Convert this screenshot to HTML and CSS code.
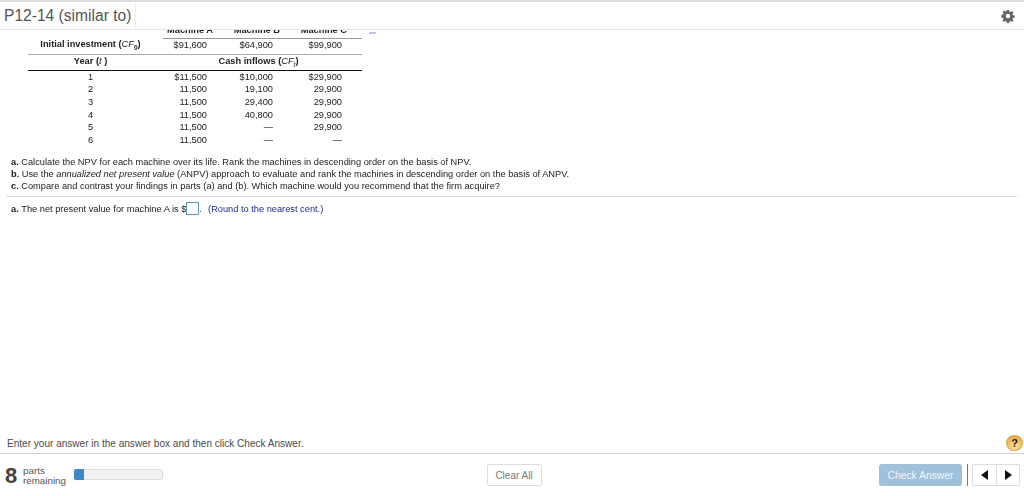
FILE: index.html
```html
<!DOCTYPE html>
<html lang="en">
<head>
<meta charset="utf-8">
<title>P12-14 (similar to)</title>
<link rel="stylesheet" href="styles.css">
</head>
<body>
<div class="app">
  <header class="topbar">
    <h1 class="title">P12-14 (similar to)</h1>
    <svg class="gear" width="14" height="14" viewBox="0 0 16 16" aria-hidden="true">
      <path fill="#666" fill-rule="evenodd" d="M6.7 1h2.6l.3 2 1.2.5 1.7-1.2 1.8 1.8-1.2 1.7.5 1.2 2 .3v2.6l-2 .3-.5 1.2 1.2 1.7-1.8 1.8-1.7-1.2-1.2.5-.3 2H6.7l-.3-2-1.2-.5-1.7 1.2-1.8-1.8 1.2-1.7-.5-1.2-2-.3V6.700l2-.3.5-1.200-1.200-1.700 1.800-1.800 1.700 1.200 1.200-.5zM8 5.500a2.500 2.500 0 1 0 0 5 2.500 2.500 0 0 0 0-5z"/>
    </svg>
  </header>
  <main class="content">
    <div class="table-clip">
      <table class="data">
        <tr class="clipped"><th></th><th><span>Machine A</span></th><th><span>Machine B</span></th><th><span>Machine C</span></th></tr>
        <tr class="r-init"><th class="lbl">Initial investment (<i>CF</i><sub>0</sub>)</th><td>$91,600</td><td>$64,900</td><td>$99,900</td></tr>
        <tr class="r-head"><th class="yr">Year (<i>t</i> )</th><th colspan="3" class="cash">Cash inflows (<i>CF<sub>t</sub></i>)</th></tr>
        <tr><td class="yr">1</td><td>$11,500</td><td>$10,000</td><td>$29,900</td></tr>
        <tr><td class="yr">2</td><td>11,500</td><td>19,100</td><td>29,900</td></tr>
        <tr><td class="yr">3</td><td>11,500</td><td>29,400</td><td>29,900</td></tr>
        <tr><td class="yr">4</td><td>11,500</td><td>40,800</td><td>29,900</td></tr>
        <tr><td class="yr">5</td><td>11,500</td><td>—</td><td>29,900</td></tr>
        <tr><td class="yr">6</td><td>11,500</td><td>—</td><td>—</td></tr>
      </table>
      <span class="expand"></span>
    </div>
    <div class="questions">
      <p><b>a.</b> Calculate the NPV for each machine over its life. Rank the machines in descending order on the basis of NPV.</p>
      <p><b>b.</b> Use the <i>annualized net present value</i> (ANPV) approach to evaluate and rank the machines in descending order on the basis of ANPV.</p>
      <p><b>c.</b> Compare and contrast your findings in parts (a) and (b). Which machine would you recommend that the firm acquire?</p>
    </div>
    <div class="answer">
      <b>a.</b>&nbsp;The net present value for machine A is $<span class="box"></span>.&nbsp;&nbsp;<span class="hint">(Round to the nearest cent.)</span>
    </div>
  </main>
  <div class="instruction">
    <span>Enter your answer in the answer box and then click Check Answer.</span>
    <span class="help">?</span>
  </div>
  <footer class="footer">
    <div class="parts">
      <span class="num">8</span>
      <span class="parts-text">parts<br>remaining</span>
      <span class="progress"><span class="progress-fill"></span></span>
    </div>
    <button class="clear" type="button">Clear All</button>
    <div class="actions">
      <button class="check" type="button">Check Answer</button>
      <span class="divider"></span>
      <div class="nav">
        <span class="nav-btn"><svg width="7" height="10" viewBox="0 0 7 10" aria-hidden="true"><path d="M7 0v10L0 5z" fill="#111"/></svg></span>
        <span class="nav-btn"><svg width="7" height="10" viewBox="0 0 7 10" aria-hidden="true"><path d="M0 0v10l7-5z" fill="#111"/></svg></span>
      </div>
    </div>
  </footer>
</div>
</body>
</html>
```
FILE: styles.css
```css
* { box-sizing: border-box; }
html, body { margin: 0; padding: 0; background: #fff; }
body { font-family: "Liberation Sans", Arial, sans-serif; color: #222; }
.app { width: 1024px; height: 496px; display: flex; flex-direction: column; overflow: hidden; }
.topbar { height: 30px; flex: none; display: flex; align-items: center; justify-content: space-between; border-top: 2px solid #dcdce2; border-bottom: 1px solid #e6e6ea; padding: 0 9px 0 4px; }
.title { margin: 0; height: 26px; border-right: 1px solid #ececec; font-size: 15.6px; font-weight: 400; line-height: 26px; color: #555; width: 132px; white-space: nowrap; }
.gear { display: block; }
.content { flex: 1; min-height: 0; overflow: hidden; font-size: 9.25px; color: #222; filter: blur(0.3px); }
.table-clip { position: relative; height: 117px; overflow: hidden; }
.data { border-collapse: collapse; margin: -9px 0 0 28px; width: 334px; table-layout: fixed; font-size: 9.25px; }
.data th, .data td { padding: 0; height: 12.75px; line-height: 12px; text-align: right; font-weight: 400; }
.data tr > :nth-child(1) { width: 135px; text-align: center; padding-right: 10px; }
.data tr > :nth-child(2) { width: 44px; }
.data tr > :nth-child(3) { width: 66px; }
.data tr > :nth-child(4) { width: 89px; padding-right: 20px; }
.data .lbl { font-weight: 700; text-align: right; padding-right: 21px; }
.data th { font-weight: 700; }
.data i { font-weight: 400; }
.data sub { font-size: 6.5px; line-height: 0; }
.data .clipped th { height: 17px; padding-bottom: 0; border-bottom: 1px solid #999; vertical-align: bottom; }
.data .clipped th:first-child { border-bottom: 0; }
.clipped span { display: block; white-space: nowrap; margin-bottom: 3px; line-height: 9px; }
.clipped th:nth-child(2) span { margin-right: -6px; }
.clipped th:nth-child(3) span { margin-right: -7px; }
.clipped th:nth-child(4) span { margin-right: -5px; }
.data .r-init th, .data .r-init td { height: 16px; padding-bottom: 3px; border-bottom: 1px solid #aaa; }
.data .r-head th { height: 16px; padding-bottom: 2px; border-bottom: 1px solid #111; text-align: center; }
.data .r-head .cash { width: auto; padding-right: 8px; }
.expand { position: absolute; left: 369px; top: 2px; width: 7px; height: 2px; background: #b9c4e4; }
.questions { margin-top: 9px; padding-left: 11px; }
.questions p { margin: 0; line-height: 12px; white-space: nowrap; }
.answer { margin: 4px 7px 0 6px; padding: 5px 0 0 5px; border-top: 1px solid #ddd; line-height: 14px; white-space: nowrap; height: 20px; }
.box { display: inline-block; width: 13px; height: 13px; border: 1px solid #5b9bb8; vertical-align: -3px; }
.hint { color: #1f2a8a; margin-left: 1px; }
.instruction { height: 24px; flex: none; display: flex; align-items: center; justify-content: space-between; padding: 3px 1px 0 7px; border-bottom: 1px solid #d0d0d6; font-size: 10.05px; color: #4a4a4a; }
.help { width: 17px; height: 16px; border-radius: 50%; background: radial-gradient(circle at 50% 80%, #fde2a0, #e3a233); border: 1px solid #d9a24a; color: #222; font-weight: 700; font-size: 11px; line-height: 14px; text-align: center; }
.footer { height: 42px; flex: none; display: grid; grid-template-columns: 1fr auto 1fr; align-items: start; padding: 10px 0 0 5px; position: relative; }
.parts { display: flex; align-items: center; height: 24px; }
.num { font-size: 22px; font-weight: 700; line-height: 22px; color: #444; width: 17px; }
.parts-text { font-size: 9.8px; line-height: 10px; color: #555; width: 51px; margin-left: 1px; }
.progress { width: 89px; height: 11px; border: 1px solid #ddd; border-radius: 2px; background: #f2f2f2; display: block; margin-top: -4px; }
.progress-fill { display: block; width: 10px; height: 11px; margin: -1px 0 0 -1px; background: #3d87c9; border-radius: 2px 0 0 2px; }
.clear { grid-column: 2; width: 55px; height: 22px; margin: 0 0 0 -1px; padding: 0; border: 1px solid #ddd; border-radius: 2px; background: #fff; font: 400 10px "Liberation Sans", Arial, sans-serif; color: #777; }
.actions { display: flex; align-items: center; justify-content: flex-end; padding-right: 4px; }
.check { width: 83px; height: 22px; padding: 0; border: 0; border-radius: 3px; background: #9fc1db; color: #f2f6fa; font: 400 10.3px "Liberation Sans", Arial, sans-serif; }
.divider { width: 1px; height: 22px; background: #777; margin: 0 4px 0 5px; }
.nav { display: flex; height: 22px; border: 1px solid #ddd; border-radius: 2px; }
.nav-btn { width: 23px; display: flex; align-items: center; justify-content: center; }
.nav-btn + .nav-btn { border-left: 1px solid #ddd; }
```
